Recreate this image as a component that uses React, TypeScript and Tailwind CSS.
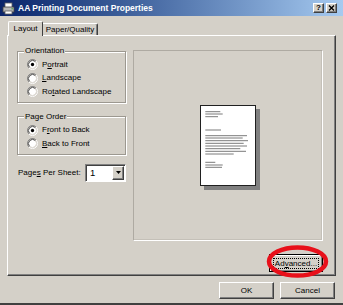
import React from 'react';

const FACE = 'bg-[#d4d0c8]';
const RAISED =
  'border border-t-white border-l-white border-r-[#404040] border-b-[#404040] shadow-[inset_-1px_-1px_0_#808080]';

function Radio({ checked }: { checked?: boolean }) {
  return (
    <svg width="11" height="11" viewBox="0 0 12 12" className="shrink-0">
      <circle cx="6" cy="6" r="4.5" fill="#fff" />
      <path d="M2.11 9.89 A5.5 5.5 0 0 1 9.89 2.11" fill="none" stroke="#808080" />
      <path d="M9.89 2.11 A5.5 5.5 0 0 1 2.11 9.89" fill="none" stroke="#fff" />
      <path d="M2.82 9.18 A4.5 4.5 0 0 1 9.18 2.82" fill="none" stroke="#404040" />
      <path d="M9.18 2.82 A4.5 4.5 0 0 1 2.82 9.18" fill="none" stroke="#d4d0c8" />
      {checked && <circle cx="6" cy="6" r="1.8" fill="#000" />}
    </svg>
  );
}

function RadioRow({ checked, children }: { checked?: boolean; children: React.ReactNode }) {
  return (
    <div className="flex items-center h-[13.5px] gap-[4px] ml-[3px]">
      <Radio checked={checked} />
      <span className="whitespace-nowrap">{children}</span>
    </div>
  );
}

const PAGE_LINES: [number, number][] = [
  [5.7, 19.3], [8, 21.7], [10.7, 17], [24, 20], [29.7, 46], [32, 41.7], [34.7, 47],
  [37.3, 42.7], [40, 46], [42.7, 39.3], [45.3, 45], [48, 32.7], [56.3, 14.3], [59, 21.7], [61.3, 21],
];

export default function App() {
  return (
    <div className={`relative w-[343px] h-[305px] ${FACE} flex flex-col border-b-2 border-b-[#404040] text-[8px] leading-[10px] text-black font-['Liberation_Sans',Arial,sans-serif] overflow-hidden`}>
      {/* title bar */}
      <div className="h-[16px] shrink-0 flex items-center bg-linear-to-r from-[#0a246a] to-[#a6caf0]">
        <svg width="13" height="13" viewBox="0 0 13 13" className="ml-[2px]">
          <rect x="3" y="1" width="7" height="5" fill="#fff" stroke="#606060" strokeWidth="0.8" />
          <rect x="1" y="5" width="11" height="5" fill="#b8b8b8" stroke="#404040" strokeWidth="0.8" />
          <rect x="3" y="9" width="7" height="3" fill="#fff" stroke="#606060" strokeWidth="0.8" />
          <rect x="9.5" y="6.3" width="1.3" height="1" fill="#20a020" />
        </svg>
        <span className="ml-[3px] text-white font-bold text-[8.5px] whitespace-nowrap">AA Printing Document Properties</span>
        <div className="ml-auto mr-[6px] flex gap-[2px]">
          <div className={`w-[11px] h-[10px] ${FACE} ${RAISED} flex items-center justify-center text-[8px] font-bold leading-none`}>?</div>
          <div className={`w-[11px] h-[10px] ${FACE} ${RAISED} flex items-center justify-center`}>
            <svg width="7" height="6" viewBox="0 0 7 6">
              <path d="M1 0.5 L6 5.5 M6 0.5 L1 5.5" stroke="#000" strokeWidth="1.4" />
            </svg>
          </div>
        </div>
      </div>

      {/* tabs */}
      <div className="mt-[5px] ml-[8px] h-[14px] flex items-end shrink-0">
        <div className={`relative z-10 -mb-[1px] h-[15px] w-[35px] ${FACE} border-t border-l border-t-white border-l-white border-r border-r-[#404040] rounded-t-[2px] flex items-center justify-center`}>
          Layout
        </div>
        <div className={`h-[12px] w-[55px] ${FACE} border-t border-t-white border-r border-r-[#404040] shadow-[inset_-1px_0_0_#808080] rounded-tr-[2px] flex items-center justify-center`}>
          Paper/Quality
        </div>
      </div>

      {/* panel */}
      <div className={`ml-[7px] w-[329px] h-[241px] shrink-0 ${RAISED} pt-[10px] pl-[9px] pr-[12px] flex flex-col`}>
        <div className="flex gap-[7px]">
          {/* left column */}
          <div className="w-[109px] flex flex-col">
            <fieldset className="border border-[#9c9890] shadow-[inset_1px_1px_0_#fff,1px_1px_0_#fff] pl-[6px] pb-[3px]">
              <legend className={`${FACE} px-[1px]`}>Orientation</legend>
              <div className="pt-[2px]">
                <RadioRow checked>P<u>o</u>rtrait</RadioRow>
                <RadioRow><u>L</u>andscape</RadioRow>
                <RadioRow>Ro<u>t</u>ated Landscape</RadioRow>
              </div>
            </fieldset>

            <fieldset className="mt-[9px] border border-[#9c9890] shadow-[inset_1px_1px_0_#fff,1px_1px_0_#fff] pl-[6px] pb-[3px]">
              <legend className={`${FACE} px-[1px]`}>Page Order</legend>
              <div className="pt-[2px]">
                <RadioRow checked>F<u>r</u>ont to Back</RadioRow>
                <RadioRow><u>B</u>ack to Front</RadioRow>
              </div>
            </fieldset>

            <div className="mt-[9px] flex items-center justify-between">
              <span className="ml-[1px] whitespace-nowrap">Page<u>s</u> Per Sheet:</span>
              <div className="w-[41px] h-[18px] border border-t-[#808080] border-l-[#808080] border-r-white border-b-white shadow-[inset_1px_1px_0_#404040] bg-white flex items-center">
                <span className="ml-[4px] text-[9.5px]">1</span>
                <div className={`ml-auto mr-[1px] w-[12px] h-[14px] ${FACE} ${RAISED} flex items-center justify-center`}>
                  <svg width="5" height="3" viewBox="0 0 5 3">
                    <path d="M0 0 H5 L2.5 3 Z" fill="#000" />
                  </svg>
                </div>
              </div>
            </div>
          </div>

          {/* preview */}
          <div className="mt-[4px] w-[190px] h-[191px] border border-t-[#aeaaa2] border-l-[#aeaaa2] border-r-white border-b-white shadow-[inset_-1px_-1px_0_#c4c0b8] flex items-center justify-center">
            <div className="w-[56px] h-[81px] bg-white border border-[#202020] shadow-[4px_4px_0_#808080]">
              <svg width="54" height="79" viewBox="0 0 54 79">
                {PAGE_LINES.map(([y, x2], i) => (
                  <line key={i} x1="4.3" y1={y} x2={x2} y2={y} stroke="#7a7a7a" strokeWidth="1" />
                ))}
              </svg>
            </div>
          </div>
        </div>

        <div className="mt-[13px] flex justify-end">
          <div className="relative">
            <div className={`w-[54px] h-[18px] ${FACE} border border-black shadow-[inset_1px_1px_0_#fff,inset_-1px_-1px_0_#808080] flex items-center justify-center`}>
              <span className="border border-dotted border-black px-[1px] leading-[9px] whitespace-nowrap">Ad<u>v</u>anced...</span>
            </div>
            {/* red annotation */}
            <svg width="63" height="33" viewBox="0 0 63 33" className="absolute left-[-3px] top-[-9px] pointer-events-none">
              <ellipse cx="31.5" cy="16.5" rx="28.5" ry="14" fill="none" stroke="#e8101a" strokeWidth="4.5" />
            </svg>
          </div>
        </div>
      </div>

      {/* dialog buttons */}
      <div className="mt-[6px] pr-[8px] flex justify-end gap-[6px] shrink-0">
        <div className={`w-[55px] h-[17px] ${FACE} ${RAISED} flex items-center justify-center`}>OK</div>
        <div className={`w-[55px] h-[17px] ${FACE} ${RAISED} flex items-center justify-center`}>Cancel</div>
      </div>
    </div>
  );
}
